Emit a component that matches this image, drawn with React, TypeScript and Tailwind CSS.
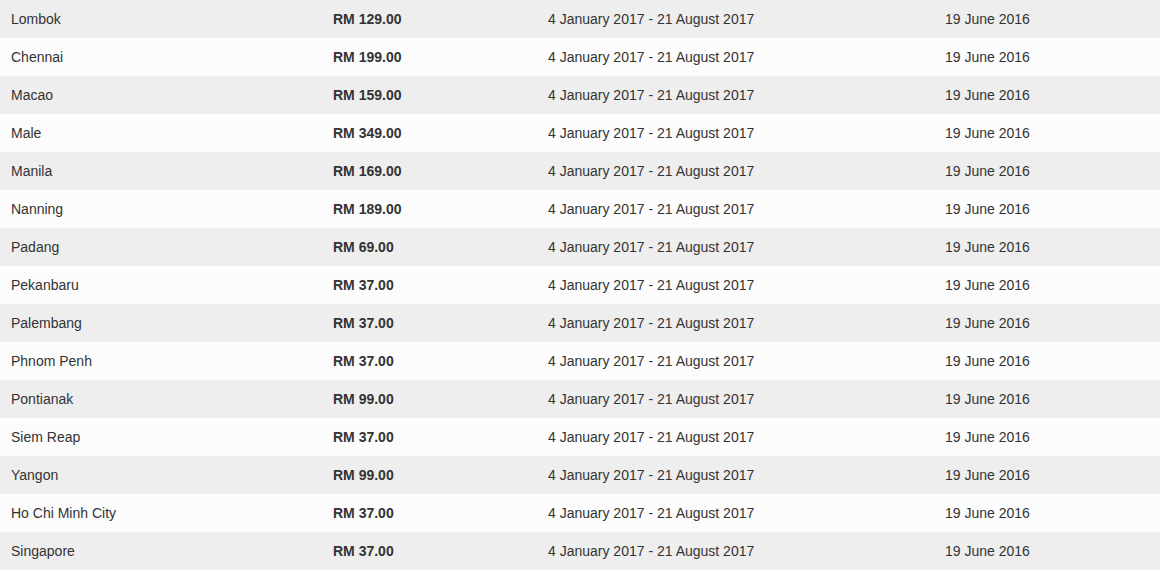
const rows: [string, string][] = [
  ["Lombok", "RM 129.00"],
  ["Chennai", "RM 199.00"],
  ["Macao", "RM 159.00"],
  ["Male", "RM 349.00"],
  ["Manila", "RM 169.00"],
  ["Nanning", "RM 189.00"],
  ["Padang", "RM 69.00"],
  ["Pekanbaru", "RM 37.00"],
  ["Palembang", "RM 37.00"],
  ["Phnom Penh", "RM 37.00"],
  ["Pontianak", "RM 99.00"],
  ["Siem Reap", "RM 37.00"],
  ["Yangon", "RM 99.00"],
  ["Ho Chi Minh City", "RM 37.00"],
  ["Singapore", "RM 37.00"],
];

export default function App() {
  return (
    <div className="w-[1160px] bg-white font-['Liberation_Sans',Arial,sans-serif] text-[14px] text-[#333333]">
      {rows.map(([city, price], i) => (
        <div
          key={city}
          className={`grid h-[38px] grid-cols-[322px_215px_397px_1fr] items-center ${
            i % 2 === 0 ? "bg-[#eeeeee]" : "bg-[#fcfcfc]"
          }`}
        >
          <div className="pl-[11px]">{city}</div>
          <div className="pl-[11px] font-bold">{price}</div>
          <div className="pl-[11px]">4 January 2017 - 21 August 2017</div>
          <div className="pl-[11px]">19 June 2016</div>
        </div>
      ))}
    </div>
  );
}
